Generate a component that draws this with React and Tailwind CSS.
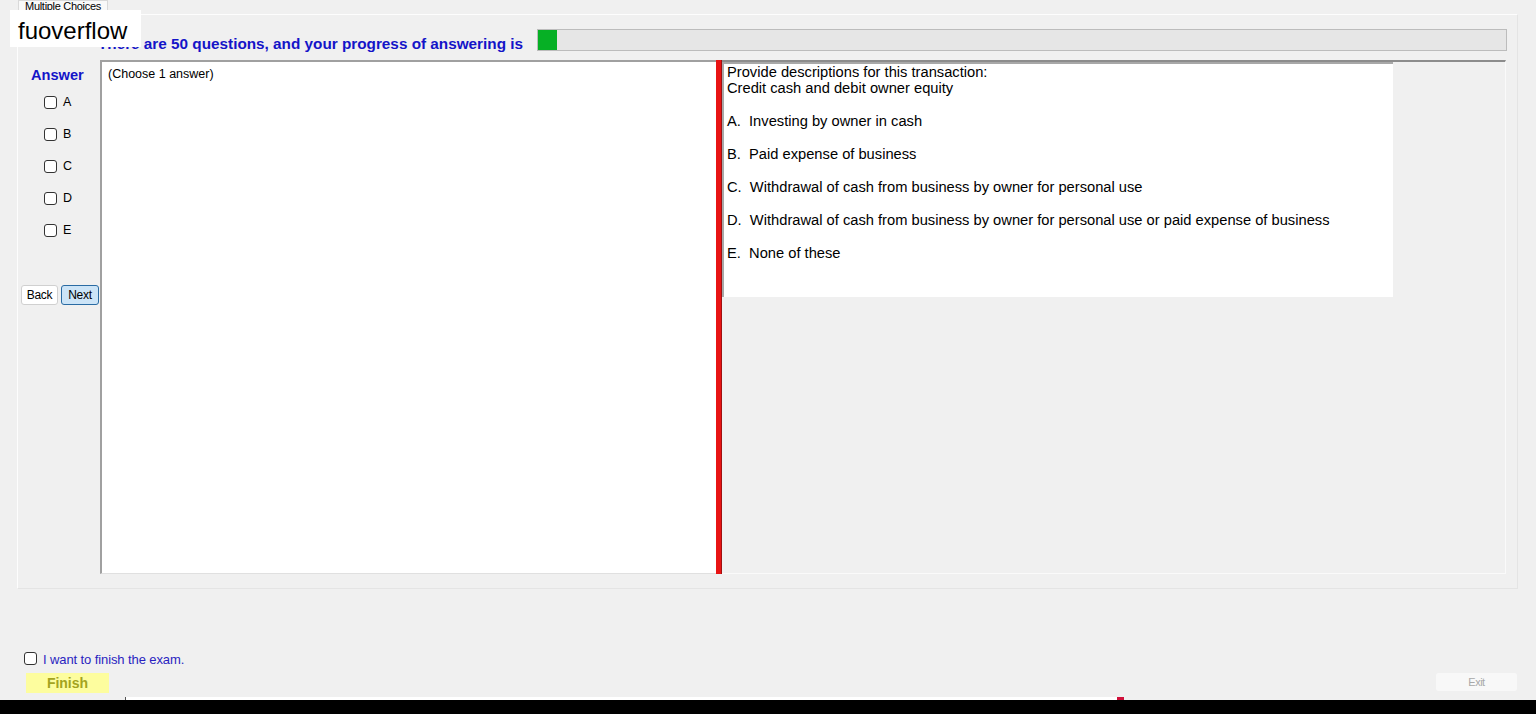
// Màn hình thi trắc nghiệm (Multiple Choices)

const options = [
    "A.  Investing by owner in cash",
    "B.  Paid expense of business",
    "C.  Withdrawal of cash from business by owner for personal use",
    "D.  Withdrawal of cash from business by owner for personal use or paid expense of business",
    "E.  None of these",
];

function Box() {
    return (
        <span className="inline-block shrink-0 w-[13px] h-[13px] rounded-[3px] border border-[#333] bg-white" />
    );
}

export default function App() {
    return (
        <div
            className="relative w-[1536px] h-[714px] overflow-hidden bg-[#f0f0f0] text-black"
            style={{ fontFamily: '"Liberation Sans", Arial, sans-serif' }}
        >
            {/* tab */}
            <div className="flex h-[14px] pl-[18px]">
                <div className="w-[90px] h-[15px] bg-[#f9f9f9] border border-b-0 border-[#d9d9d9] text-[11px] leading-[10px] text-center overflow-hidden -tracking-[0.3px]">
                    Multiple Choices
                </div>
            </div>

            {/* tab page */}
            <div className="ml-[17px] w-[1501px] h-[575px] border border-[#fdfdfd] border-r-[#e4e4e4] border-b-[#e4e4e4] bg-[#f0f0f0]">
                <div className="flex items-center h-[22px] mt-[14px]">
                    <div className="w-[519px] pr-[14px] pt-[9px] flex justify-end text-[15.3px] font-bold text-[#1414c8] whitespace-nowrap">
                        There are 50 questions, and your progress of answering is
                    </div>
                    <div className="w-[970px] h-[22px] bg-[#e6e6e6] border border-[#bcbcbc] flex">
                        <div className="w-[19px] h-full bg-[#06b025]" />
                    </div>
                </div>

                <div className="flex mt-[9px]">
                    {/* answer column */}
                    <div className="w-[82px] flex flex-col">
                        <div className="pl-[13px] pt-[7px] text-[14.6px] font-bold text-[#1414c8] leading-[16px]">
                            Answer
                        </div>
                        <div className="flex flex-col gap-[19px] pl-[26px] pt-[13px]">
                            {["A", "B", "C", "D", "E"].map((l) => (
                                <div key={l} className="flex items-center gap-[6px] h-[13px] text-[12.5px]">
                                    <Box />
                                    <span>{l}</span>
                                </div>
                            ))}
                        </div>
                        <div className="flex gap-[3px] pl-[3px] mt-[48px]">
                            <button className="w-[37px] h-[20px] rounded-[3px] bg-white border border-[#d0d0d0] text-[12px] -tracking-[0.3px]">
                                Back
                            </button>
                            <button className="w-[38px] h-[20px] rounded-[3px] bg-[#cce4f7] border border-[#2a6ba3] text-[12px] -tracking-[0.3px]">
                                Next
                            </button>
                        </div>
                    </div>

                    {/* main panes */}
                    <div className="flex h-[514px]">
                        <div className="w-[616px] h-full bg-white border-l-2 border-t-2 border-[#a0a0a0] border-b border-b-[#e0e0e0]">
                            <div className="pl-[6px] pt-[3px] text-[12.5px]">(Choose 1 answer)</div>
                        </div>
                        <div className="w-[6px] h-full bg-[#e81414] border-r border-[#a01010]" />
                        <div className="w-[784px] h-full border-t-2 border-[#8c8c8c] border-r border-r-[#fafafa] border-b border-b-[#fafafa]">
                            <div className="w-[671px] h-[235px] bg-white border-t-2 border-l-2 border-[#a8a8a8] pl-[3px] pt-0 text-[14.7px] leading-[16px]">
                                <div>Provide descriptions for this transaction:</div>
                                <div>Credit cash and debit owner equity</div>
                                <div className="flex flex-col gap-[17px] mt-[17px]">
                                    {options.map((o) => (
                                        <div key={o} className="whitespace-pre">{o}</div>
                                    ))}
                                </div>
                            </div>
                        </div>
                    </div>
                </div>
            </div>

            {/* bottom */}
            <div className="flex items-center gap-[6px] pl-[24px] mt-[63px] h-[13px]">
                <Box />
                <span className="text-[13px] text-[#2a1fc0] pt-[3px] -tracking-[0.1px]">I want to finish the exam.</span>
            </div>
            <div className="flex justify-between items-start mt-[7px] pl-[26px] pr-[18px]">
                <button className="w-[83px] h-[20px] bg-[#fdfd9e] text-[14px] font-bold text-[#a3a320] mt-[1px]">
                    Finish
                </button>
                <button className="w-[83px] h-[20px] rounded-[3px] bg-[#f8f8f8] border border-[#f0f0f0] text-[11px] text-[#a8a8a8] -tracking-[0.5px]">
                    Exit
                </button>
            </div>

            {/* taskbar strip */}
            <div className="absolute left-0 bottom-0 w-full h-[17px] flex flex-col">
                <div className="h-[3px] flex">
                    <div className="w-[125px]" />
                    <div className="w-[992px] bg-white border-l border-[#555]" />
                    <div className="w-[7px] bg-[#d0103a]" />
                </div>
                <div className="flex-1 bg-black" />
            </div>

            {/* watermark */}
            <div className="absolute left-[10px] top-[10px] w-[131px] h-[37px] bg-white pl-[8px] text-[24px] leading-[42px]">
                fuoverflow
            </div>
        </div>
    );
}
